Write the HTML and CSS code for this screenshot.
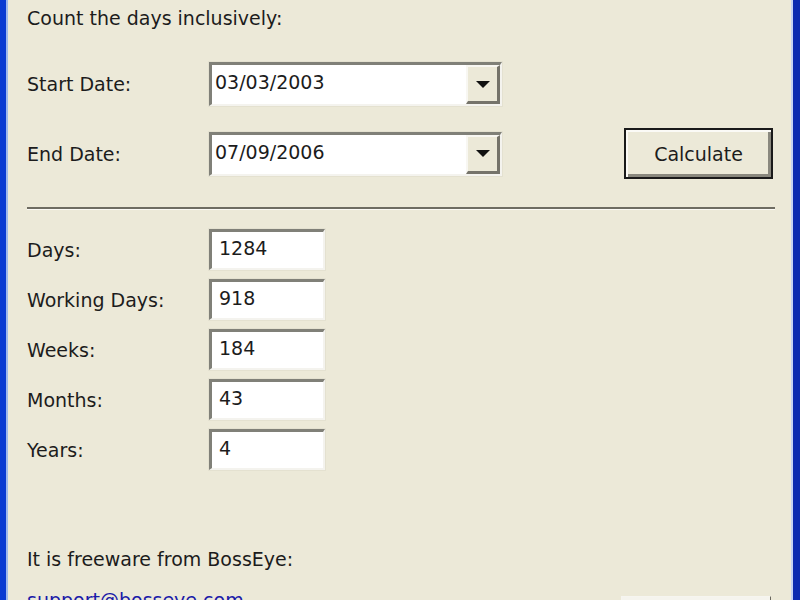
FILE: index.html
```html
<!DOCTYPE html>
<html lang="en">
<head>
    <meta charset="UTF-8">
    <title>Date Calculator</title>
    <link rel="stylesheet" href="styles.css">
</head>
<body>
    <div class="window">
        <div class="dialog">
            <p class="intro">Count the days inclusively:</p>

            <div class="dates">
                <label class="label">Start Date:</label>
                <div class="combo">
                    <span class="combo-value">03/03/2003</span>
                    <span class="combo-btn"><span class="arrow"></span></span>
                </div>
                <span></span>

                <label class="label">End Date:</label>
                <div class="combo">
                    <span class="combo-value">07/09/2006</span>
                    <span class="combo-btn"><span class="arrow"></span></span>
                </div>
                <button class="btn default">Calculate</button>
            </div>

            <hr class="sep">

            <div class="results">
                <label class="label">Days:</label>
                <div class="field">1284</div>
                <label class="label">Working Days:</label>
                <div class="field">918</div>
                <label class="label">Weeks:</label>
                <div class="field">184</div>
                <label class="label">Months:</label>
                <div class="field">43</div>
                <label class="label">Years:</label>
                <div class="field">4</div>
            </div>

            <div class="footer">
                <p class="note">It is freeware from BossEye:</p>
                <div class="footer-row">
                    <a class="link" href="#">support@bosseye.com</a>
                    <span class="btn close"></span>
                </div>
            </div>
        </div>
    </div>
</body>
</html>
```

FILE: styles.css
```css
* {
    margin: 0;
    padding: 0;
    box-sizing: border-box;
}

body {
    width: 800px;
    height: 600px;
    overflow: hidden;
    background: #ece9d8;
    font-family: Tahoma, "DejaVu Sans", sans-serif;
    font-size: 19px;
    color: #1c1c1c;
}

.window {
    height: 600px;
    border-left: 6px solid #0a3ad2;
    border-right: 7px solid #0a2ab0;
    box-shadow: inset 2px 0 0 #9fb8ec, inset -2px 0 0 #c4d2f2;
    background: #ece9d8;
}

.dialog {
    padding: 4px 20px 0 21px;
    display: flex;
    flex-direction: column;
}

.intro {
    line-height: 28px;
}

.label {
    display: flex;
    align-items: center;
}

/* start / end date rows */
.dates {
    margin-top: 30px;
    display: grid;
    grid-template-columns: 182px 293px 1fr;
    row-gap: 22px;
    align-items: center;
}

.combo {
    height: 44px;
    display: flex;
    align-items: stretch;
    background: #fff;
    border-top: 3px solid #808078;
    border-left: 3px solid #808078;
    border-right: 2px solid #f4f3ee;
    border-bottom: 2px solid #f4f3ee;
    box-shadow: 0 0 0 1px #e4e1d0;
}

.combo-value {
    flex: 1;
    padding: 4px 0 0 3px;
    line-height: 26px;
}

.combo-btn {
    width: 34px;
    background: #ece9d8;
    border-top: 2px solid #f8f7f2;
    border-left: 2px solid #f8f7f2;
    border-right: 3px solid #75736a;
    border-bottom: 3px solid #75736a;
    display: flex;
    align-items: center;
    justify-content: center;
}

.arrow {
    width: 0;
    height: 0;
    border-left: 7px solid transparent;
    border-right: 7px solid transparent;
    border-top: 7px solid #111;
}

.btn {
    font: inherit;
    color: inherit;
    background: #ece9d8;
    cursor: pointer;
}

.btn.default {
    justify-self: end;
    width: 149px;
    height: 51px;
    border: 2px solid #1a1a1a;
    box-shadow: inset 2px 2px 0 #fbfaf6, inset -3px -3px 0 #8a887e;
}

.sep {
    margin-top: 28px;
    border: none;
    border-top: 2px solid #6e6c62;
    border-bottom: 1px solid #fbfaf5;
    width: 748px;
}

/* computed values */
.results {
    margin-top: 19px;
    display: grid;
    grid-template-columns: 182px 116px;
    row-gap: 9px;
}

.field {
    height: 41px;
    background: #fff;
    padding: 3px 0 0 7px;
    line-height: 26px;
    border-top: 3px solid #808078;
    border-left: 3px solid #808078;
    border-right: 2px solid #f4f3ee;
    border-bottom: 2px solid #f4f3ee;
    box-shadow: 0 0 0 1px #e4e1d0;
}

.footer {
    margin-top: 75px;
}

.note {
    line-height: 28px;
}

.footer-row {
    margin-top: 13px;
    display: flex;
    justify-content: space-between;
    align-items: flex-start;
}

.link {
    color: #1a1aa8;
    text-decoration: none;
    line-height: 28px;
}

.btn.close {
    display: block;
    margin-top: 10px;
    margin-right: 2px;
    width: 150px;
    height: 44px;
    border: 1px solid #f6f5f0;
    border-right-color: #6a685e;
    background: #f5f4ee;
}
```
